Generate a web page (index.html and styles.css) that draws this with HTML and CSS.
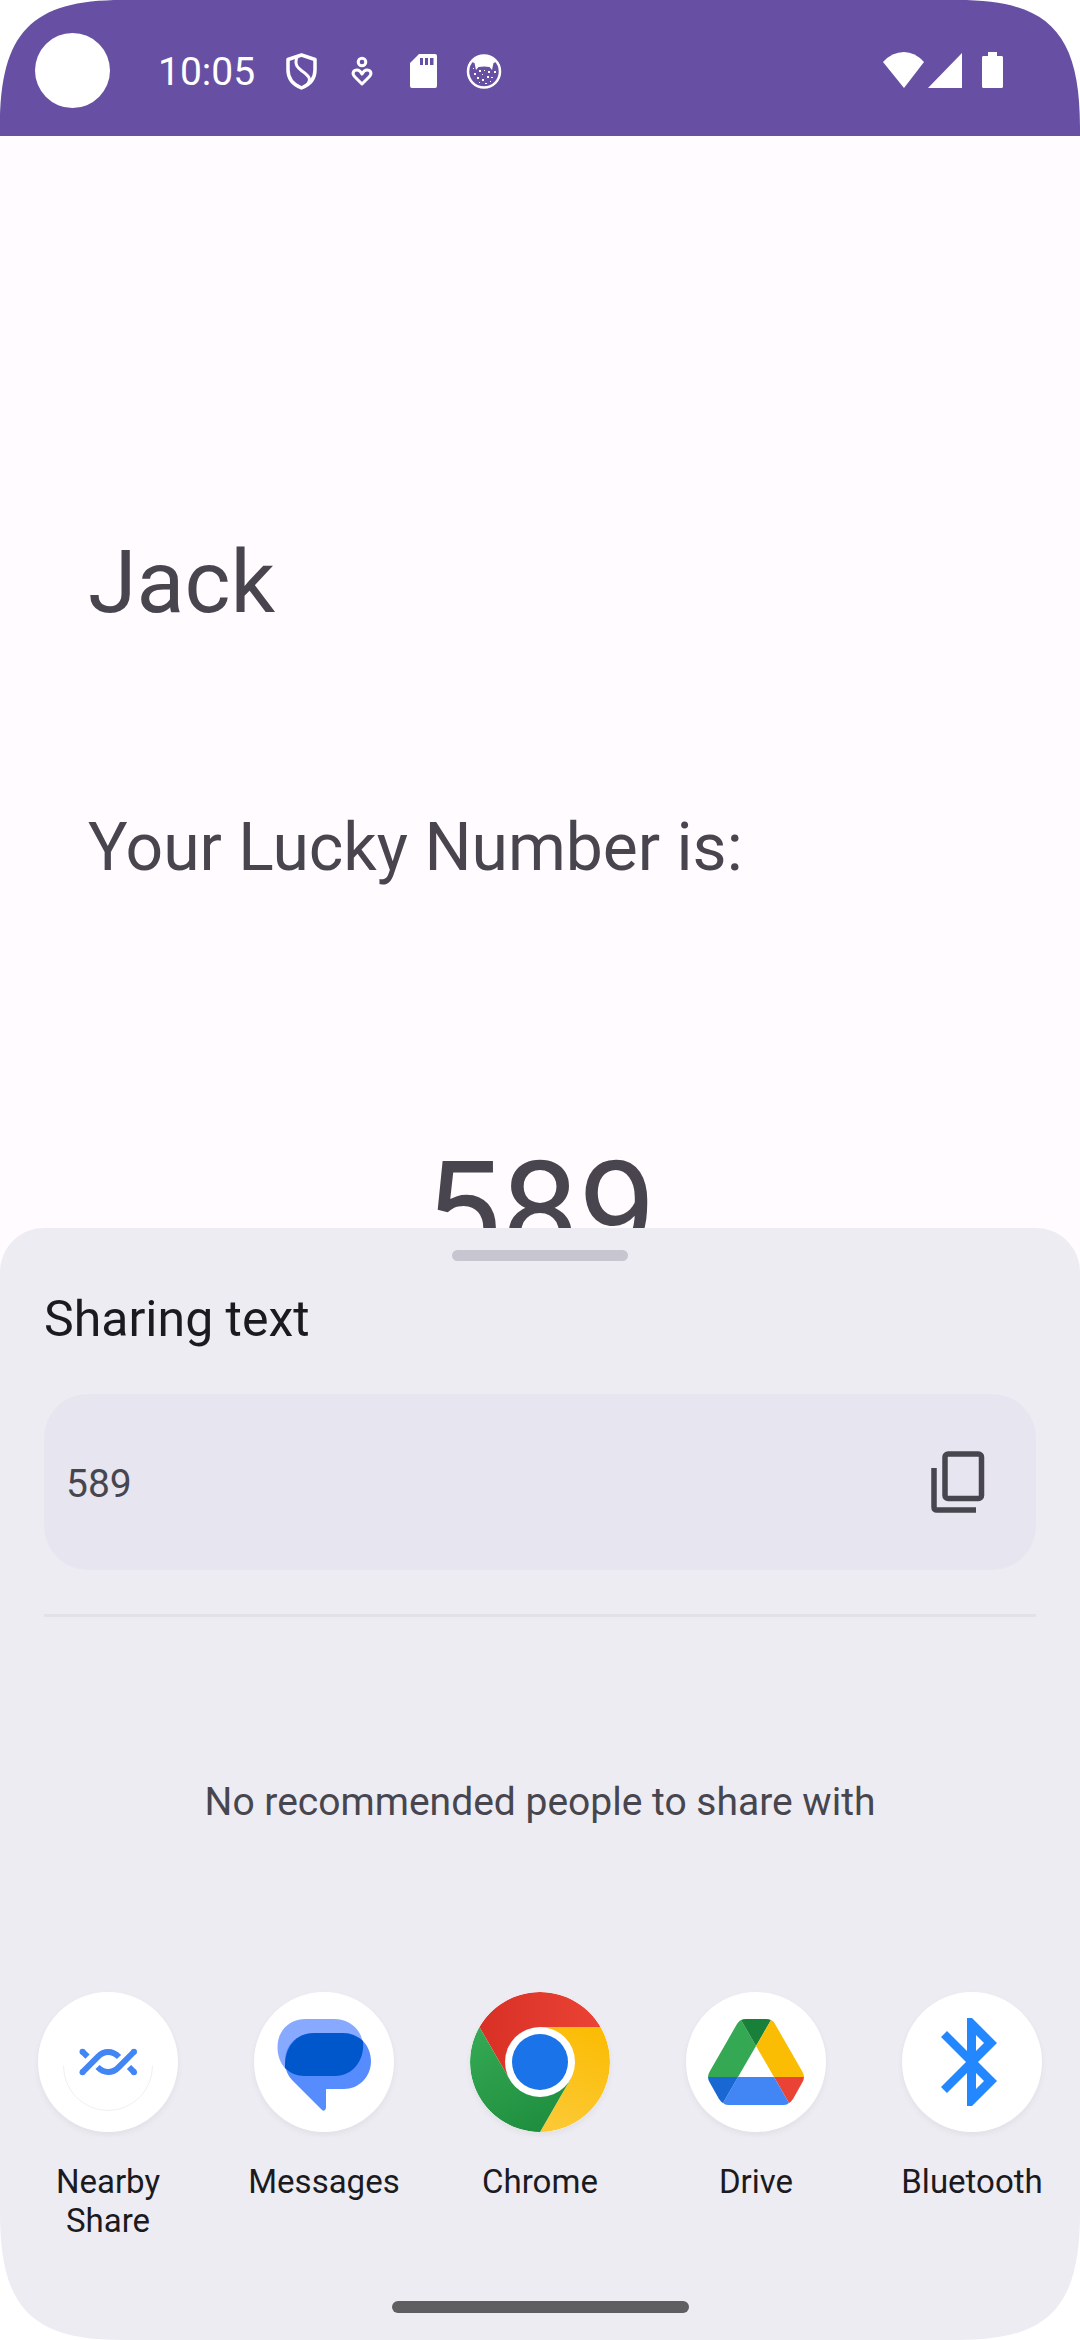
FILE: index.html
```html
<!DOCTYPE html>
<html lang="en">
<head>
<meta charset="utf-8">
<meta name="viewport" content="width=device-width, initial-scale=1">
<title>Sharing text</title>
<link rel="stylesheet" href="styles.css">
</head>
<body>
<div class="screen">
  <header class="status">
    <span class="camera"></span>
    <div class="status-start">
      <time class="clock">10:05</time>
      <div class="notifications">
        <svg class="icon" viewBox="0 0 48 48" aria-hidden="true" fill="none" stroke="#fff" stroke-width="3.500" stroke-linejoin="round">
          <path d="M24.500 7 L38 11.500 V22 C38 31 32 37 24.500 40 C17 37 11 31 11 22 V11.500 Z"/>
          <path d="M20 9 C17 17 21 20 25 23 C32 28 35 31 30 37" stroke-width="3"/>
        </svg>
        <svg class="icon" viewBox="0 0 48 48" aria-hidden="true" fill="none" stroke="#fff" stroke-width="3" stroke-linejoin="round">
          <circle cx="24" cy="14" r="3.800"/>
          <path d="M24 36 L17 29 C13 25 16 22 19 22 C22 22 23 24 24 26 C25 24 26 22 29 22 C32 22 35 25 31 29 Z"/>
        </svg>
        <svg class="icon" viewBox="0 0 48 48" aria-hidden="true" fill="#fff">
          <path fill-rule="evenodd" d="M20 6 H36 Q38 6 38 8 V38 Q38 40 36 40 H13 Q11 40 11 38 V15 Z M21 10 V17 H24 V10 Z M26 10 V17 H29 V10 Z M31 10 V17 H34.500 V10 Z"/>
        </svg>
        <svg class="icon" viewBox="0 0 48 48" aria-hidden="true" fill="#fff">
          <circle cx="24" cy="23.500" r="16" fill="none" stroke="#fff" stroke-width="2.500"/>
          <path d="M12 14 Q16 7 24 7 Q32 7 36 14 L33.500 15 L32 22 L29.500 19 Q24 18 18.500 19 L16 22 L14.500 15Z"/>
          <path d="M13 20h1v1h-1z M14 25h2v2h-2z M19 22h2v2h-2z M24 22h1v1h-1z M28 23h2v2h-2z M34 23h2v2h-2z M27 28h2v2h-2z M22 26h1v1h-1z M17 29h2v2h-2z M22 31h2v2h-2z M31 29h2v1h-2z M25 35h2v1h-2z M19 34h1v1h-1z M30 33h1v1h-1z"/>
        </svg>
      </div>
    </div>
    <div class="system">
      <svg class="wifi" viewBox="0 0 42 36" aria-hidden="true" fill="#fff"><path d="M0 10 Q9 0 21 0 Q32 0 41 10 L21 36 Z"/></svg>
      <svg class="signal" viewBox="0 0 34 36" aria-hidden="true" fill="#fff"><path d="M34 1 V36 H0 Z"/></svg>
      <svg class="battery" viewBox="0 0 21 36" aria-hidden="true" fill="#fff"><path d="M6 0 H15 V4 H20 L21 5 V35 L20 36 H1 L0 35 V5 L1 4 H6 Z"/></svg>
    </div>
  </header>

  <main class="app">
    <h1 class="name">Jack</h1>
    <p class="caption">Your Lucky Number is:</p>
    <p class="number">589</p>
  </main>

  <section class="sheet" aria-label="Share">
    <span class="handle"></span>
    <h2 class="title">Sharing text</h2>
    <div class="preview">
      <p class="preview-text">589</p>
      <button class="copy" type="button" aria-label="Copy">
        <svg viewBox="0 0 66 66" aria-hidden="true" fill="none" stroke="#47464f" stroke-width="5.500">
          <rect x="19" y="5" width="36.500" height="44.500" rx="3"/>
          <path d="M8 19 V58 Q8 61 11 61 H50"/>
        </svg>
      </button>
    </div>
    <hr class="divider">
    <p class="empty">No recommended people to share with</p>
    <div class="targets">
      <button class="target" type="button">
        <svg class="logo" viewBox="0 0 140 140" aria-hidden="true">
          <path d="M25.500 74 A44.500 44.500 0 0 0 114.500 74" fill="none" stroke="#efefef"/>
          <g fill="none" stroke="#4285f4" stroke-width="6">
            <path d="M44.300 59.500 L49.500 64.700 M91 75 L96.300 80.300"/>
            <path d="M44.300 80.300 L60 64.600 Q64.700 60 70 60 Q76 60 81 65"/>
            <path d="M96.300 59.500 L80.500 75.300 Q76 80 70 80 Q64.500 80 59.500 75"/>
          </g>
          <g fill="#4285f4"><circle cx="44.500" cy="59.700" r="3"/><circle cx="44.500" cy="80.200" r="3"/><circle cx="96" cy="59.700" r="3"/><circle cx="96" cy="80.200" r="3"/></g>
        </svg>
        <span>Nearby Share</span>
      </button>
      <button class="target" type="button">
        <svg class="logo" viewBox="0 0 140 140" aria-hidden="true">
          <path d="M52 27 H80 C96 27 109 38 109 55 C109 72 97 84 81 84 H50 C34 84 23.500 72 23.500 55 C23.500 39 35 27 52 27Z" fill="#87a9ff"/>
          <path d="M60 41 H89 C105 41 117 53 117 69 C117 85 105 97 90 97 H72 V116 Q71 120 68 118 L39 89 C34 84 31 78 31 69 C31 53 43 41 60 41Z" fill="#578cff"/>
          <path d="M60 41 H89 Q100 41 109 49 C111 69 98 84 81 84 H50 Q39 84 31 76 C30 55 42 41 60 41Z" fill="#0057cc"/>
        </svg>
        <span>Messages</span>
      </button>
      <button class="target" type="button">
        <svg class="logo" viewBox="0 0 140 140" aria-hidden="true">
          <defs>
            <linearGradient id="red" x1="0" x2="1"><stop offset="0" stop-color="#d93025"/><stop offset="1" stop-color="#ea4335"/></linearGradient>
            <linearGradient id="yellow" x1="0.4" y1="1" x2="0.7" y2="0"><stop offset="0" stop-color="#fcc934"/><stop offset="1" stop-color="#fbbc04"/></linearGradient>
            <linearGradient id="green" x1="0.7" y1="1" x2="0.2" y2="0"><stop offset="0" stop-color="#1e8e3e"/><stop offset="1" stop-color="#34a853"/></linearGradient>
          </defs>
          <path d="M70 70 L39.700 87.500 L9.400 35 A70 70 0 0 1 130.600 35 L70 35Z" fill="url(#red)"/>
          <path d="M70 35 H130.600 A70 70 0 0 1 70 140 L100.300 87.500 L70 70Z" fill="url(#yellow)"/>
          <path d="M9.400 35 A70 70 0 0 0 70 140 L100.300 87.500 L70 70 L39.700 87.500Z" fill="url(#green)"/>
          <circle cx="70" cy="70" r="35" fill="#fff"/>
          <circle cx="70" cy="70" r="28" fill="#1a73e8"/>
        </svg>
        <span>Chrome</span>
      </button>
      <button class="target" type="button">
        <svg class="logo" viewBox="0 0 140 140" aria-hidden="true">
          <path d="M55 28 L70 54 L52 85 H22 Q22 82 24 79 L51 32 Q53 29 55 28Z" fill="#34a853"/>
          <path d="M55 28 Q57 27 60 27 H80 Q83 27 85 28 L70 54Z" fill="#188038"/>
          <path d="M85 28 Q88 29 89 32 L116 79 Q118 82 118 85 H88 L70 54Z" fill="#fbbc04"/>
          <path d="M88 85 H118 Q118 88 116 91 L107 107 Q105 110 103 111Z" fill="#ea4335"/>
          <path d="M52 85 H88 L103 111 Q101 113 98 113 H42 Q39 113 37 111Z" fill="#4285f4"/>
          <path d="M22 85 H52 L37 111 Q35 110 33 107 L24 91 Q22 88 22 85Z" fill="#1967d2"/>
        </svg>
        <span>Drive</span>
      </button>
      <button class="target" type="button">
        <svg class="logo" viewBox="0 0 140 140" aria-hidden="true">
          <path fill-rule="evenodd" fill="#2388ff" d="M65 26 H70 L95 51 L76 70 L95 89 L70 114 H65 V81 L45 101 L39 95 L64 70 L39 45 L45 39 L65 59Z M74 43 V59 L82 51Z M74 81 V97 L82 89Z"/>
        </svg>
        <span>Bluetooth</span>
      </button>
    </div>
    <span class="home-bar"></span>
  </section>

  <!-- Rounded display corners, drawn over everything else -->
  <svg class="corner top left" viewBox="0 0 128 128" aria-hidden="true"><path id="corner" d="M0 0 V127 C0 32 32 0 122 0Z" fill="#fff"/></svg>
  <svg class="corner top right" viewBox="0 0 128 128" aria-hidden="true"><use href="#corner"/></svg>
  <svg class="corner bottom left" viewBox="0 0 128 128" aria-hidden="true"><use href="#corner"/></svg>
  <svg class="corner bottom right" viewBox="0 0 128 128" aria-hidden="true"><use href="#corner"/></svg>
</div>
</body>
</html>
```
FILE: styles.css
```css
* {
  box-sizing: border-box;
}

body {
  margin: 0;
  background: #fff;
  font-family: Roboto, "Noto Sans", sans-serif;
}

h1,
h2,
p {
  margin: 0;
  font-weight: 400;
}

button {
  padding: 0;
  border: 0;
  background: none;
  font: inherit;
  color: inherit;
}

.screen {
  position: relative;
  min-height: 100vh;
  overflow: hidden;
  background: #fffbff;
}

.status {
  display: flex;
  align-items: center;
  height: 136px;
  padding: 4px 77px 0 35px;
  background: #6750a3;
  color: #fff;
}

.camera {
  width: 75px;
  height: 75px;
  border-radius: 50%;
  background: #fff;
}

.status-start {
  display: flex;
  align-items: center;
  gap: 22px;
  margin-left: 48px;
  padding-top: 4px;
}

.clock {
  font-size: 39px;
  line-height: 48px;
}

.notifications {
  display: flex;
  gap: 13px;
}

.icon {
  width: 48px;
  height: 48px;
}

.system {
  display: flex;
  margin-left: auto;
}

.wifi {
  width: 42px;
  height: 36px;
}

.signal {
  width: 34px;
  height: 36px;
  margin-left: 3px;
}

.battery {
  width: 21px;
  height: 36px;
  margin-left: 20px;
}

.app {
  padding: 394px 88px 0;
  color: #49454f;
}

.name {
  font-size: 88px;
  line-height: 104px;
}

.caption {
  margin-top: 174px;
  font-size: 66px;
  line-height: 80px;
}

.number {
  margin-top: 244px;
  font-size: 138px;
  line-height: 160px;
  text-align: center;
}

.sheet {
  display: flex;
  position: absolute;
  right: 0;
  bottom: 0;
  left: 0;
  flex-direction: column;
  align-items: center;
  padding: 22px 0 27px;
  border-radius: 44px 44px 0 0;
  background: #edecf3;
  color: #1b1b1f;
}

.handle {
  width: 176px;
  height: 11px;
  border-radius: 6px;
  background: #c6c5d0;
}

.title {
  align-self: stretch;
  margin: 28px 44px 0;
  font-size: 50px;
  line-height: 60px;
}

.preview {
  display: flex;
  align-items: center;
  align-self: stretch;
  justify-content: space-between;
  height: 176px;
  margin: 45px 44px 0;
  padding: 0 44px 0 22px;
  border-radius: 44px;
  background: #e7e5ef;
  color: #47464f;
}

.preview-text {
  padding-top: 4px;
  font-size: 39px;
  line-height: 46px;
}

.copy {
  width: 66px;
  height: 66px;
}

.copy svg {
  display: block;
}

.divider {
  align-self: stretch;
  height: 3px;
  margin: 44px 44px 0;
  border: 0;
  background: #e2e1e8;
}

.empty {
  margin-top: 162px;
  color: #47464f;
  font-size: 39px;
  line-height: 46px;
}

.targets {
  display: grid;
  grid-template-columns: repeat(5, 1fr);
  align-self: stretch;
  margin-top: 167px;
}

.target {
  display: flex;
  flex-direction: column;
  align-items: center;
  gap: 30px;
  padding: 0 24px;
  font-size: 33px;
  line-height: 39px;
}

.logo {
  width: 140px;
  height: 140px;
  border-radius: 50%;
  background: #fff;
  box-shadow: 0 3px 6px #0000000d;
}

.home-bar {
  width: 297px;
  height: 12px;
  margin-top: 61px;
  border-radius: 6px;
  background: #5f5f61;
}

.corner {
  position: absolute;
  width: 128px;
  height: 128px;
}

.top {
  top: 0;
}

.bottom {
  bottom: 0;
}

.left {
  left: 0;
}

.right {
  right: 0;
}

.top.right {
  transform: scaleX(-1);
}

.bottom.left {
  transform: scaleY(-1);
}

.bottom.right {
  transform: scale(-1);
}
```
